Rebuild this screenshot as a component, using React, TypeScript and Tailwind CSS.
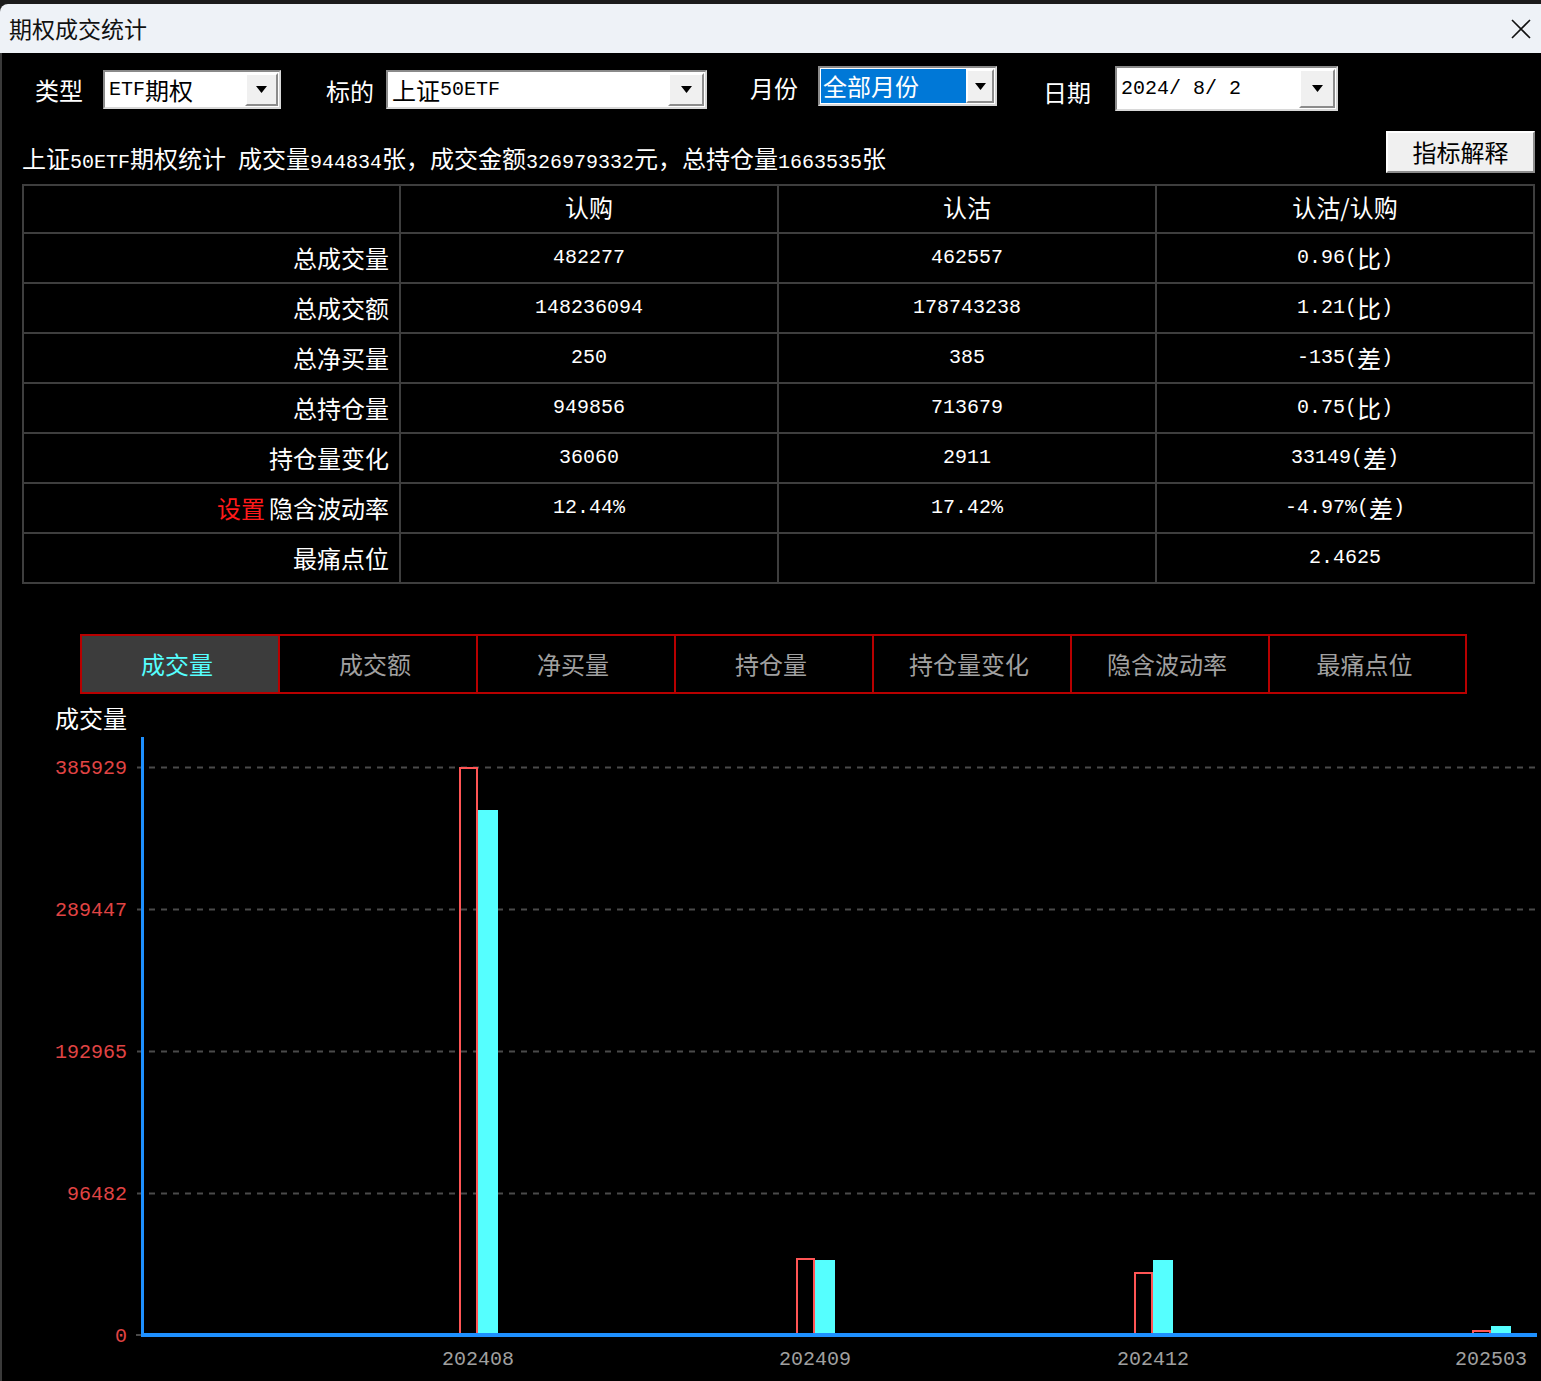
import React from "react";

const ASCII = /^[\x20-\x7e]+$/;

function Mixed({ text }: { text: string }) {
  const parts = text.split(/([\x20-\x7e]+)/).filter(Boolean);
  return (
    <>
      {parts.map((p, i) =>
        ASCII.test(p) ? (
          <span key={i} className="font-['Liberation_Mono',monospace] text-[20px] whitespace-pre">
            {p}
          </span>
        ) : (
          <span key={i}>{p}</span>
        )
      )}
    </>
  );
}

function Arrow() {
  return (
    <svg width="11" height="7" viewBox="0 0 11 7">
      <path d="M0 0H11L5.5 7Z" fill="#000" />
    </svg>
  );
}

function Combo({
  w,
  h,
  text,
  btn,
  selected,
}: {
  w: string;
  h: string;
  text: string;
  btn: string;
  selected?: boolean;
}) {
  return (
    <div
      className={`${w} ${h} flex bg-white border-2 border-t-[#8a8a8a] border-l-[#8a8a8a] border-r-[#d8d8d8] border-b-[#d8d8d8] p-[1px]`}
    >
      <div className="flex-1 flex items-center min-w-0">
        {selected ? (
          <div className="h-full w-full bg-[#0078d7] text-white flex items-center pl-[2px] leading-none">
            <Mixed text={text} />
          </div>
        ) : (
          <div className="pl-[3px] text-black leading-none flex items-center">
            <Mixed text={text} />
          </div>
        )}
      </div>
      <div
        className={`${btn} bg-[#f0f0f0] border-2 border-t-white border-l-white border-r-[#8c8c8c] border-b-[#8c8c8c] flex items-center justify-center`}
      >
        <Arrow />
      </div>
    </div>
  );
}

const rows: { label: string; call: string; put: string; ratio: string; red?: boolean }[] = [
  { label: "总成交量", call: "482277", put: "462557", ratio: "0.96(比)" },
  { label: "总成交额", call: "148236094", put: "178743238", ratio: "1.21(比)" },
  { label: "总净买量", call: "250", put: "385", ratio: "-135(差)" },
  { label: "总持仓量", call: "949856", put: "713679", ratio: "0.75(比)" },
  { label: "持仓量变化", call: "36060", put: "2911", ratio: "33149(差)" },
  { label: "隐含波动率", call: "12.44%", put: "17.42%", ratio: "-4.97%(差)", red: true },
  { label: "最痛点位", call: "", put: "", ratio: "2.4625" },
];

const tabs = ["成交量", "成交额", "净买量", "持仓量", "持仓量变化", "隐含波动率", "最痛点位"];

const cell = "border-r-2 border-b-2 border-[#3e3e3e] flex items-center";

function Chart() {
  const grid = [767, 909, 1051, 1193];
  const yLabels = [
    { y: 767, t: "385929" },
    { y: 909, t: "289447" },
    { y: 1051, t: "192965" },
    { y: 1193, t: "96482" },
    { y: 1335, t: "0" },
  ];
  const bars = [
    { x: 459, red: 767, cyan: 810, label: "202408" },
    { x: 796, red: 1258, cyan: 1260, label: "202409" },
    { x: 1134, red: 1272, cyan: 1260, label: "202412" },
    { x: 1472, red: 1330, cyan: 1326, label: "202503" },
  ];
  return (
    <svg width="1539" height="649" viewBox="2 732 1539 649" className="block">
      {grid.map((y) => (
        <line key={y} x1="137" x2="1537" y1={y + 0.5} y2={y + 0.5} stroke="#4a4a4a" strokeWidth="2" strokeDasharray="6 6" />
      ))}
      <line x1="136" x2="141" y1="1335" y2="1335" stroke="#4a4a4a" strokeWidth="2" />
      {yLabels.map((l) => (
        <text
          key={l.t}
          x="127"
          y={l.y + 7}
          textAnchor="end"
          fill="#e04444"
          fontFamily="'Liberation Mono', monospace"
          fontSize="20"
        >
          {l.t}
        </text>
      ))}
      {bars.map((b) => (
        <g key={b.label}>
          <rect x={b.x + 1} y={b.red + 1} width="17" height={1335 - b.red - 1} fill="none" stroke="#ff5555" strokeWidth="2" />
          <rect x={b.x + 19} y={b.cyan} width="20" height={1335 - b.cyan} fill="#55ffff" />
          <text
            x={b.x + 19}
            y="1365"
            textAnchor="middle"
            fill="#a0a0a0"
            fontFamily="'Liberation Mono', monospace"
            fontSize="20"
          >
            {b.label}
          </text>
        </g>
      ))}
      <rect x="141" y="737" width="3" height="600" fill="#1e90ff" />
      <rect x="141" y="1333" width="1396" height="4" fill="#1e90ff" />
    </svg>
  );
}

export default function App() {
  return (
    <div className="w-[1541px] h-[1381px] overflow-hidden bg-[#1b1b1b] font-['Noto_Sans_CJK_SC','Noto_Sans',sans-serif] text-[24px]">
      <div className="h-[4px] bg-[#1b1b1b]" />
      {/* title bar */}
      <div className="h-[49px] bg-[#eef2f7] rounded-tl-[8px] flex items-center justify-between pl-[9px] pr-[10px]">
        <span className="text-[23px] leading-none text-[#111]">期权成交统计</span>
        <svg width="20" height="20" viewBox="0 0 20 20">
          <path d="M1 1L19 19M19 1L1 19" stroke="#111" strokeWidth="1.6" />
        </svg>
      </div>

      <div className="h-[1328px] bg-black border-l-2 border-[#3a3a3a] text-white">
        {/* controls */}
        <div className="h-[60px] flex items-start leading-[24px]">
          <span className="ml-[33px] mt-[25px] w-[48px] whitespace-nowrap">类型</span>
          <div className="ml-[20px] mt-[17px]">
            <Combo w="w-[178px]" h="h-[39px]" text="ETF期权" btn="w-[33px]" />
          </div>
          <span className="ml-[45px] mt-[26px] w-[48px] whitespace-nowrap">标的</span>
          <div className="ml-[12px] mt-[17px]">
            <Combo w="w-[321px]" h="h-[39px]" text="上证50ETF" btn="w-[36px]" />
          </div>
          <span className="ml-[43px] mt-[23px] w-[48px] whitespace-nowrap">月份</span>
          <div className="ml-[20px] mt-[13px]">
            <Combo w="w-[179px]" h="h-[40px]" text="全部月份" btn="w-[28px]" selected />
          </div>
          <span className="ml-[46px] mt-[27px] w-[48px] whitespace-nowrap">日期</span>
          <div className="ml-[24px] mt-[13px]">
            <Combo w="w-[223px]" h="h-[45px]" text="2024/ 8/ 2" btn="w-[36px]" />
          </div>
        </div>

        {/* summary */}
        <div className="h-[71px] flex items-start justify-between pr-[6px]">
          <div className="ml-[20px] mt-[31px] leading-[28px] whitespace-nowrap">
            <Mixed text="上证50ETF期权统计 成交量944834张，成交金额326979332元，总持仓量1663535张" />
          </div>
          <button className="mt-[18px] w-[149px] h-[42px] bg-[#f0f0f0] text-black border-2 border-t-white border-l-white border-r-[#8c8c8c] border-b-[#8c8c8c] leading-none">
            指标解释
          </button>
        </div>

        {/* table */}
        <div className="ml-[20px] w-[1513px] border-t-2 border-l-2 border-[#3e3e3e] grid grid-cols-[377px_378px_378px_378px] leading-none">
          <div className={`${cell} h-[48px]`} />
          <div className={`${cell} h-[48px] justify-center pb-[4px]`}>认购</div>
          <div className={`${cell} h-[48px] justify-center pb-[4px]`}>认沽</div>
          <div className={`${cell} h-[48px] justify-center pb-[4px]`}>认沽/认购</div>
          {rows.map((r) => (
            <React.Fragment key={r.label}>
              <div className={`${cell} h-[50px] justify-end pr-[10px]`}>
                {r.red && <span className="text-[#ff1a1a] mr-[4px]">设置</span>}
                {r.label}
              </div>
              <div className={`${cell} h-[50px] justify-center`}>
                <Mixed text={r.call} />
              </div>
              <div className={`${cell} h-[50px] justify-center`}>
                <Mixed text={r.put} />
              </div>
              <div className={`${cell} h-[50px] justify-center`}>
                <Mixed text={r.ratio} />
              </div>
            </React.Fragment>
          ))}
        </div>

        {/* tabs */}
        <div className="mt-[50px] ml-[78px] w-[1387px] h-[60px] border-2 border-[#b80000] flex">
          {tabs.map((t, i) => (
            <div
              key={t}
              className={
                i === 0
                  ? "w-[198px] h-full border-r-2 border-[#b80000] bg-[#3c3c3c] text-[#55ffff] flex items-center justify-center leading-none pr-[6px]"
                  : i === tabs.length - 1
                  ? "flex-1 h-full text-[#a0a0a0] flex items-center justify-center leading-none pr-[6px]"
                  : "w-[198px] h-full border-r-2 border-[#b80000] text-[#a0a0a0] flex items-center justify-center leading-none pr-[6px]"
              }
            >
              {t}
            </div>
          ))}
        </div>

        <div className="mt-[10px] ml-[53px] h-[28px] leading-[28px]">成交量</div>
        <Chart />
      </div>
    </div>
  );
}
